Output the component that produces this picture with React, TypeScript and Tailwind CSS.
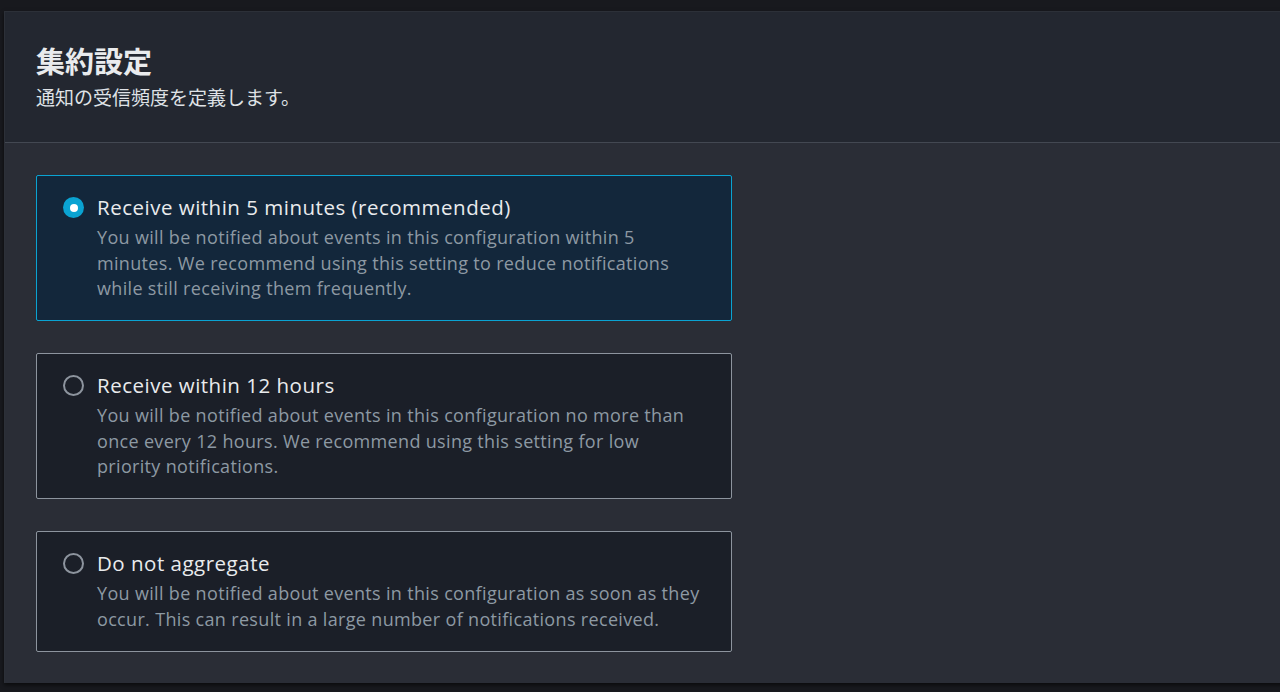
import React from "react";

type Opt = { title: string; desc: string; selected?: boolean };

const options: Opt[] = [
  {
    title: "Receive within 5 minutes (recommended)",
    desc: "You will be notified about events in this configuration within 5 minutes. We recommend using this setting to reduce notifications while still receiving them frequently.",
    selected: true,
  },
  {
    title: "Receive within 12 hours",
    desc: "You will be notified about events in this configuration no more than once every 12 hours. We recommend using this setting for low priority notifications.",
  },
  {
    title: "Do not aggregate",
    desc: "You will be notified about events in this configuration as soon as they occur. This can result in a large number of notifications received.",
  },
];

function Radio({ selected }: { selected?: boolean }) {
  if (selected) {
    return (
      <span className="mt-[5px] flex h-[21px] w-[21px] shrink-0 items-center justify-center rounded-full bg-[#0aa3d2]">
        <span className="h-[8px] w-[8px] rounded-full bg-white" />
      </span>
    );
  }
  return (
    <span className="mt-[5px] block h-[21px] w-[21px] shrink-0 rounded-full border-2 border-[#8d949e]" />
  );
}

export default function App() {
  return (
    <div
      className="h-[692px] w-[1280px] overflow-hidden bg-[#18191e] pt-[11px] pl-[4px]"
      style={{ fontFamily: '"Open Sans", "Noto Sans CJK JP", sans-serif' }}
    >
      <div className="w-[1300px] border-t border-l border-[#2c3038] shadow-[0_2px_4px_rgba(0,0,0,0.6)]">
        <div className="h-[131px] border-b border-[#434852] bg-[#232730] pt-[30px] pl-[31px]">
          <h1
            className="text-[29px] font-bold leading-[36px] text-[#e9ebed]"
            style={{ fontFamily: '"Noto Sans CJK JP", sans-serif' }}
          >
            集約設定
          </h1>
          <p
            className="mt-[6px] text-[19px] leading-[26px] text-[#dfe2e6]"
            style={{ fontFamily: '"Noto Sans CJK JP", sans-serif' }}
          >
            通知の受信頻度を定義します。
          </p>
        </div>
        <div className="flex h-[540px] flex-col gap-[32px] bg-[#2a2d36] pt-[32px] pl-[31px]">
          {options.map((o) => (
            <div
              key={o.title}
              className={
                o.selected
                  ? "flex w-[696px] gap-[13px] rounded-[2px] border border-[#0aa3d2] bg-[#13273b] pt-[16px] pr-[24px] pb-[18.5px] pl-[26px]"
                  : "flex w-[696px] gap-[13px] rounded-[2px] border border-[#8d949e] bg-[#1b1f28] pt-[16px] pr-[24px] pb-[18.5px] pl-[26px]"
              }
            >
              <Radio selected={o.selected} />
              <div className="min-w-0 flex-1">
                <div className="text-[20.5px] font-medium leading-[30px] tracking-[0.5px] text-[#e9ebed]">{o.title}</div>
                <div className="mt-[3px] text-[18px] leading-[25.5px] tracking-[0.33px] text-[#8d99a3]">{o.desc}</div>
              </div>
            </div>
          ))}
        </div>
      </div>
    </div>
  );
}
